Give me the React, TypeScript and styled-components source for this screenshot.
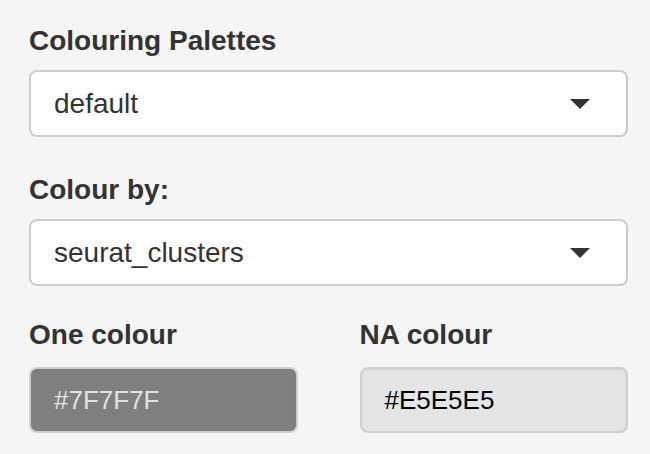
import React from "react";
import styled, { createGlobalStyle } from "styled-components";

const GlobalStyle = createGlobalStyle`
  html, body {
    margin: 0;
    padding: 0;
    background: #f5f5f5;
  }
  body {
    font-family: "Liberation Sans", Arial, Helvetica, sans-serif;
    color: #333;
  }
`;

const Panel = styled.div`
  box-sizing: border-box;
  width: 650px;
  min-height: 454px;
  padding: 21px 22px 0 29px;
  background: #f5f5f5;
`;

const FormGroup = styled.div<{ $space: number }>`
  margin-bottom: ${(p) => p.$space}px;
`;

const Label = styled.label<{ $space?: number }>`
  display: block;
  font-size: 28px;
  font-weight: 700;
  line-height: 40px;
  margin-bottom: ${(p) => p.$space ?? 9}px;
  color: #333;
`;

const Select = styled.div`
  box-sizing: border-box;
  display: flex;
  align-items: center;
  justify-content: space-between;
  height: 67px;
  padding: 0 36px 0 23px;
  background: #fff;
  border: 2px solid #cccccc;
  border-radius: 8px;
  font-size: 28px;
  color: #333;
`;

const Caret = styled.span`
  width: 0;
  height: 0;
  border-left: 10px solid transparent;
  border-right: 10px solid transparent;
  border-top: 10px solid #333;
`;

const ColourRow = styled.div`
  display: grid;
  grid-template-columns: 1fr 1fr;
  column-gap: 62px;
`;

const ColourInput = styled.div<{ $bg: string; $fg: string }>`
  box-sizing: border-box;
  display: flex;
  align-items: center;
  height: 66px;
  padding: 0 23px;
  background: ${(p) => p.$bg};
  color: ${(p) => p.$fg};
  border: 2px solid #cfcfcf;
  border-radius: 8px;
  box-shadow: inset 0 1px 2px rgba(0, 0, 0, 0.075);
  font-size: 26px;
`;

const colours = [
  { label: "One colour", value: "#7F7F7F", fg: "#e2e2e2" },
  { label: "NA colour", value: "#E5E5E5", fg: "#000" },
];

export default function App() {
  return (
    <>
      <GlobalStyle />
      <Panel>
        <FormGroup $space={33}>
          <Label>Colouring Palettes</Label>
          <Select>
            <span>default</span>
            <Caret />
          </Select>
        </FormGroup>
        <FormGroup $space={29}>
          <Label>Colour by:</Label>
          <Select>
            <span>seurat_clusters</span>
            <Caret />
          </Select>
        </FormGroup>
        <ColourRow>
          {colours.map((c) => (
            <div key={c.label}>
              <Label $space={12}>{c.label}</Label>
              <ColourInput $bg={c.value} $fg={c.fg}>
                {c.value}
              </ColourInput>
            </div>
          ))}
        </ColourRow>
      </Panel>
    </>
  );
}
